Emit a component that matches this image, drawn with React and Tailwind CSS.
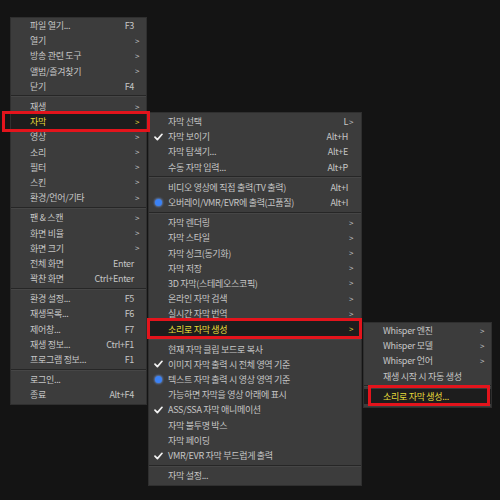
import React from "react";

const S = "sep";

const mainItems = [
  { l: "파일 열기...", s: "F3" },
  { l: "열기", a: true },
  { l: "방송 관련 도구", a: true },
  { l: "앨범/즐겨찾기", a: true },
  { l: "닫기", s: "F4" },
  S,
  { l: "재생", a: true },
  { l: "자막", a: true, hl: true },
  { l: "영상", a: true },
  { l: "소리", a: true },
  { l: "필터", a: true },
  { l: "스킨", a: true },
  { l: "환경/언어/기타", a: true },
  S,
  { l: "팬 & 스캔", a: true },
  { l: "화면 비율", a: true },
  { l: "화면 크기", a: true },
  { l: "전체 화면", s: "Enter" },
  { l: "꽉찬 화면", s: "Ctrl+Enter" },
  S,
  { l: "환경 설정...", s: "F5" },
  { l: "재생목록...", s: "F6" },
  { l: "제어창...", s: "F7" },
  { l: "재생 정보...", s: "Ctrl+F1" },
  { l: "프로그램 정보...", s: "F1" },
  S,
  { l: "로그인..." },
  { l: "종료", s: "Alt+F4" },
];

const subItems = [
  { l: "자막 선택", s: "L", a: true },
  { l: "자막 보이기", s: "Alt+H", c: true },
  { l: "자막 탐색기...", s: "Alt+E" },
  { l: "수동 자막 입력...", s: "Alt+P" },
  S,
  { l: "비디오 영상에 직접 출력(TV 출력)", s: "Alt+I" },
  { l: "오버레이/VMR/EVR에 출력(고품질)", s: "Alt+I", r: true },
  S,
  { l: "자막 렌더링", a: true },
  { l: "자막 스타일", a: true },
  { l: "자막 싱크(동기화)", a: true },
  { l: "자막 저장", a: true },
  { l: "3D 자막(스테레오스코픽)", a: true },
  { l: "온라인 자막 검색", a: true },
  { l: "실시간 자막 번역", a: true },
  { l: "소리로 자막 생성", a: true, hl: true },
  S,
  { l: "현재 자막 클립 보드로 복사" },
  { l: "이미지 자막 출력 시 전체 영역 기준", c: true },
  { l: "텍스트 자막 출력 시 영상 영역 기준", r: true },
  { l: "가능하면 자막을 영상 아래에 표시" },
  { l: "ASS/SSA 자막 애니메이션", c: true },
  { l: "자막 불투명 박스" },
  { l: "자막 페이딩" },
  { l: "VMR/EVR 자막 부드럽게 출력", c: true },
  S,
  { l: "자막 설정..." },
];

const sub2Items = [
  { l: "Whisper 엔진", a: true },
  { l: "Whisper 모델", a: true },
  { l: "Whisper 언어", a: true },
  { l: "재생 시작 시 자동 생성" },
  S,
  { l: "소리로 자막 생성...", hl: true },
];

function Check() {
  return (
    <svg width="9" height="8" viewBox="0 0 9 8">
      <path d="M1 4.2 L3.4 6.6 L8 1.3" fill="none" stroke="#f2f2f2" strokeWidth="1.7" strokeLinecap="round" strokeLinejoin="round" />
    </svg>
  );
}

function Radio() {
  return (
    <span className="block w-[7px] h-[7px] rounded-full bg-[#3b82f6] shadow-[0_0_2px_1px_rgba(120,170,255,0.55)]" />
  );
}

function Menu({ items, className, arrowW }) {
  return (
    <div className={"absolute bg-[#3c3c3c] border border-[#2f2f2f] flex flex-col " + className}>
      {items.map((it, i) =>
        it === S ? (
          <div key={i} className="h-[5px] flex flex-col justify-center">
            <div className="h-px bg-[#262626]" />
            <div className="h-px bg-[#464646]" />
          </div>
        ) : (
          <div
            key={i}
            className={
              "flex items-center h-[15.2px] whitespace-nowrap " +
              (it.hl ? "bg-[#1d1d1d] text-[#e8dc3a]" : "text-[#c6c6c6]")
            }
          >
            <div className="w-[19px] shrink-0 flex items-center justify-center">
              {it.c ? <Check /> : it.r ? <Radio /> : null}
            </div>
            <div className="flex-1">{it.l}</div>
            {it.s ? <div>{it.s}</div> : null}
            <div className={"shrink-0 text-[8px] pl-[1px] " + arrowW}>{it.a ? ">" : ""}</div>
          </div>
        )
      )}
    </div>
  );
}

export default function App() {
  return (
    <div
      className="relative w-[500px] h-[500px] bg-[#141414] overflow-hidden text-[9px] tracking-[-0.3px] leading-none"
      style={{ fontFamily: "'Noto Sans CJK KR', 'Noto Sans', sans-serif" }}
    >
      <Menu items={mainItems} className="left-[10px] top-[17px] w-[137px] pb-[1px]" arrowW="w-[12px]" />
      <Menu items={subItems} className="left-[148px] top-[112px] w-[214px] pt-[1px] pb-[2px]" arrowW="w-[13px]" />
      <Menu items={sub2Items} className="left-[363px] top-[322px] w-[129px] pb-[3px]" arrowW="w-[12px]" />

      <div className="absolute left-[2px] top-[111px] w-[148px] h-[21px] border-[3px] border-[#e3141c]" />
      <div className="absolute left-[147px] top-[318px] w-[215px] h-[21px] border-[3px] border-[#e3141c]" />
      <div className="absolute left-[368px] top-[385px] w-[122px] h-[21px] border-[3px] border-[#e3141c]" />
    </div>
  );
}
